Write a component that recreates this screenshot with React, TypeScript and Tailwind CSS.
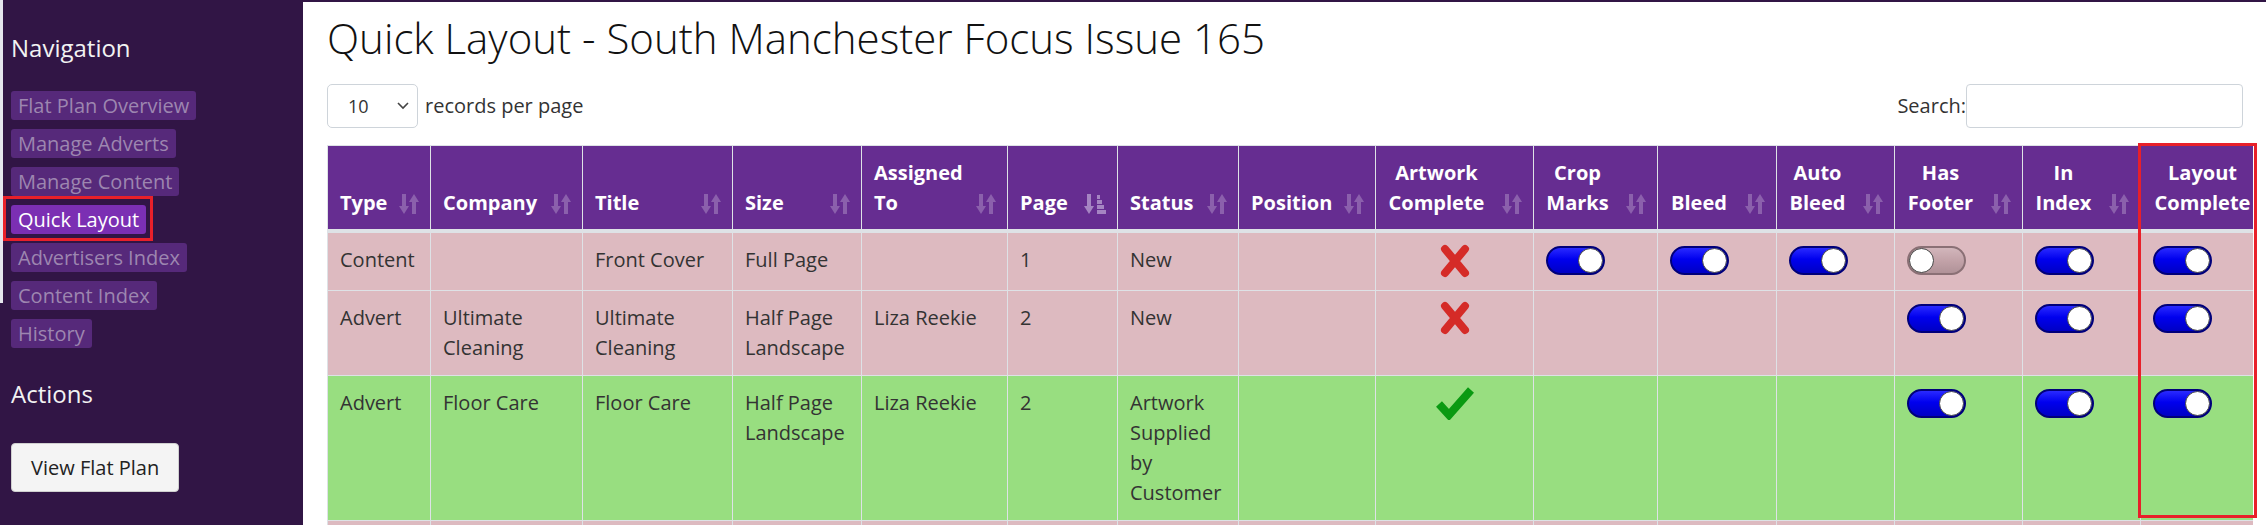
import React from 'react'

const font = "font-['Open_Sans',_'Liberation_Sans',_sans-serif]"

const navItems = [
  'Flat Plan Overview',
  'Manage Adverts',
  'Manage Content',
  'Quick Layout',
  'Advertisers Index',
  'Content Index',
  'History',
]

// widths measured off the screenshot, last one runs past the clip
const columns: { label: string[]; w: number; center?: boolean; sorted?: boolean }[] = [
  { label: ['Type'], w: 103 },
  { label: ['Company'], w: 152 },
  { label: ['Title'], w: 150 },
  { label: ['Size'], w: 129 },
  { label: ['Assigned', 'To'], w: 146 },
  { label: ['Page'], w: 110, sorted: true },
  { label: ['Status'], w: 121 },
  { label: ['Position'], w: 137 },
  { label: ['Artwork', 'Complete'], w: 158, center: true },
  { label: ['Crop', 'Marks'], w: 124, center: true },
  { label: ['Bleed'], w: 119, center: true },
  { label: ['Auto', 'Bleed'], w: 118, center: true },
  { label: ['Has', 'Footer'], w: 128, center: true },
  { label: ['In', 'Index'], w: 118, center: true },
  { label: ['Layout', 'Complete'], w: 160, center: true },
]

type Row = {
  bg: string
  text: string[][]
  artwork: 'no' | 'yes' | null
  toggles: (boolean | null)[]
}

const rows: Row[] = [
  {
    bg: 'bg-[#ddbac0]',
    text: [['Content'], [], ['Front Cover'], ['Full Page'], [], ['1'], ['New'], []],
    artwork: 'no',
    toggles: [true, true, true, false, true, true],
  },
  {
    bg: 'bg-[#ddbac0]',
    text: [['Advert'], ['Ultimate', 'Cleaning'], ['Ultimate', 'Cleaning'], ['Half Page', 'Landscape'], ['Liza Reekie'], ['2'], ['New'], []],
    artwork: 'no',
    toggles: [null, null, null, true, true, true],
  },
  {
    bg: 'bg-[#98de80]',
    text: [['Advert'], ['Floor Care'], ['Floor Care'], ['Half Page', 'Landscape'], ['Liza Reekie'], ['2'], ['Artwork', 'Supplied', 'by', 'Customer'], []],
    artwork: 'yes',
    toggles: [null, null, null, true, true, true],
  },
  {
    bg: 'bg-[#ddbac0]',
    text: [[], [], [], [], [], [], [], []],
    artwork: null,
    toggles: [null, null, null, null, null, null],
  },
]

function SortIcon() {
  return (
    <svg width="20" height="22" viewBox="0 0 20 22" fill="#8b60ac">
      <rect x="3" y="1" width="4" height="13" />
      <polygon points="0,13 10,13 5,21" />
      <polygon points="10,9 20,9 15,1" />
      <rect x="13" y="8" width="4" height="13" />
    </svg>
  )
}

function SortedIcon() {
  return (
    <svg width="22" height="22" viewBox="0 0 22 22" fill="#a585c2">
      <rect x="3" y="1" width="4" height="13" />
      <polygon points="0,13 10,13 5,21" />
      <rect x="13" y="2" width="3" height="4" />
      <rect x="13" y="7" width="5" height="4" />
      <rect x="13" y="12" width="7" height="4" />
      <rect x="13" y="17" width="9" height="4" />
    </svg>
  )
}

function Toggle({ on }: { on: boolean }) {
  return (
    <div className="h-[31px] flex items-center">
      <div
        className={`relative w-[59px] h-[29px] rounded-full border-2 ${
          on
            ? 'border-[#00007a] bg-[linear-gradient(to_bottom,#2a2aff,#0000ee_45%,#0000c4)]'
            : 'border-[#8a7075] bg-[linear-gradient(to_bottom,#d2b6bb,#c4a4aa_45%,#b09298)]'
        }`}
      >
        <div
          className={`absolute top-[0px] w-[25px] h-[25px] rounded-full bg-white border border-[#444] ${
            on ? 'right-[0px]' : 'left-[0px]'
          }`}
        />
      </div>
    </div>
  )
}

function Cross() {
  return (
    <svg width="30" height="34" viewBox="0 0 30 34" className="inline-block -mt-[2px]">
      <path d="M5 5 L25 29 M25 5 L5 29" stroke="#d52b27" strokeWidth="8" strokeLinecap="round" />
    </svg>
  )
}

function Tick() {
  return (
    <svg width="40" height="34" viewBox="0 0 40 34" className="inline-block -mt-[2px]">
      <path d="M4 18 L14 29 L36 4" stroke="#0a9a12" strokeWidth="8" fill="none" strokeLinejoin="miter" />
    </svg>
  )
}

export default function App() {
  return (
    <div className={`${font} flex w-full h-[525px] overflow-hidden bg-white`}>
      <div className="flex w-[303px] shrink-0 bg-[#311545]">
        <div className="w-[3px] h-[303px] bg-[#e6e6ee]" />
        <div className="flex-1 pl-[8px]">
          <h4 className="mt-[33px] text-[24px] leading-[29px] text-[#f2f2f2]">Navigation</h4>
          <div className="mt-[29px] flex flex-col items-start gap-[9px]">
            {navItems.map(item =>
              item === 'Quick Layout' ? (
                <span
                  key={item}
                  className="relative h-[29px] px-[7px] text-[20px] leading-[29px] rounded-[3px] bg-[#7b2fb3] text-white"
                >
                  {item}
                  {/* red annotation box */}
                  <span className="absolute -left-[8px] -right-[7px] -top-[9px] -bottom-[7px] border-[3px] border-[#e8202a]" />
                </span>
              ) : (
                <span
                  key={item}
                  className="h-[29px] px-[7px] text-[20px] leading-[29px] rounded-[3px] bg-[#56297a] text-[#9d86b0]"
                >
                  {item}
                </span>
              )
            )}
          </div>
          <h4 className="mt-[31px] text-[24px] leading-[29px] text-[#f2f2f2]">Actions</h4>
          <button className="mt-[35px] h-[49px] px-[19px] text-[20px] text-[#222] bg-[#f4f4f4] border border-[#cfcfcf] rounded-[4px]">
            View Flat Plan
          </button>
        </div>
      </div>

      <div className="relative flex-1 border-t-[2px] border-[#311545] pl-[24px] pt-[11px]">
        <h2 className="text-[42px] leading-[50px] font-light text-[#111]">
          Quick Layout - South Manchester Focus Issue 165
        </h2>

        <div className="mt-[21px] flex items-center justify-between w-[1926px]">
          <div className="flex items-center gap-[7px]">
            <div className="w-[91px] h-[44px] flex items-center justify-between pl-[20px] pr-[8px] border border-[#ced4da] rounded-[5px] text-[18px] text-[#333]">
              <span>10</span>
              <svg width="12" height="8" viewBox="0 0 12 8">
                <path d="M1 1 L6 6 L11 1" stroke="#444" strokeWidth="1.6" fill="none" />
              </svg>
            </div>
            <span className="text-[20px] leading-[30px] text-[#333]">records per page</span>
          </div>
          <div className="flex items-center mr-[10px]">
            <span className="text-[20px] leading-[30px] text-[#333]">Search:</span>
            <div className="w-[277px] h-[44px] border border-[#ced4da] rounded-[4px]" />
          </div>
        </div>

        <div className="mt-[17px] w-[1926px] overflow-hidden">
          <table className="table-fixed border-collapse w-[1973px] text-[20px] leading-[30px]">
            <colgroup>
              {columns.map(c => (
                <col key={c.label.join(' ')} style={{ width: c.w }} />
              ))}
            </colgroup>
            <thead>
              <tr>
                {columns.map(c => (
                  <th
                    key={c.label.join(' ')}
                    className={`relative align-bottom bg-[#662d91] text-white font-bold border border-[#dee2e6] border-b-[4px] pl-[12px] pt-[12px] pb-[11px] ${
                      c.center ? 'text-center pr-[48px]' : 'text-left pr-[30px]'
                    }`}
                  >
                    {c.label.map(l => (
                      <div key={l}>{l}</div>
                    ))}
                    <span className="absolute right-[11px] bottom-[14px]">
                      {c.sorted ? <SortedIcon /> : <SortIcon />}
                    </span>
                  </th>
                ))}
              </tr>
            </thead>
            <tbody>
              {rows.map((r, i) => (
                <tr key={i} className={`${r.bg} text-[#333]`}>
                  {r.text.map((lines, j) => (
                    <td key={j} className="align-top border border-[#dee2e6] px-[12px] py-[12px]">
                      {lines.length === 0 ? <div className="h-[30px]" /> : lines.map(l => <div key={l}>{l}</div>)}
                    </td>
                  ))}
                  <td className="align-top text-center border border-[#dee2e6] px-[12px] py-[12px]">
                    {r.artwork === 'no' && <Cross />}
                    {r.artwork === 'yes' && <Tick />}
                  </td>
                  {r.toggles.map((t, j) => (
                    <td key={j} className="align-top border border-[#dee2e6] px-[12px] py-[12px]">
                      {t !== null && <Toggle on={t} />}
                    </td>
                  ))}
                </tr>
              ))}
            </tbody>
          </table>
        </div>

        {/* red highlight drawn over the Layout Complete column */}
        <div className="absolute left-[1835px] top-[141px] w-[119px] h-[375px] border-[3px] border-[#e8202a]" />
      </div>
    </div>
  )
}
